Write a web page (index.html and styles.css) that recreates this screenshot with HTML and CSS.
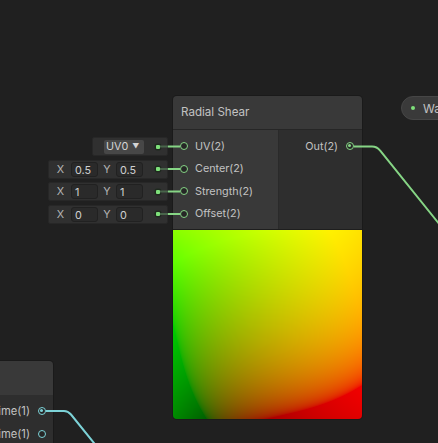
FILE: index.html
```html
<!DOCTYPE html>
<html lang="en">
<head>
    <meta charset="UTF-8">
    <meta name="viewport" content="width=device-width, initial-scale=1.0">
    <title>Radial Shear</title>
    <link rel="stylesheet" href="styles.css">
</head>
<body>
    <div class="graph">
        <!-- default values feeding the unconnected inputs -->
        <div class="inline-fields">
            <div class="field field-uv">
                <span class="dropdown">UV0 <span class="caret">&#9660;</span></span>
                <span class="field-dot"></span>
            </div>
            <div class="field">
                <span class="axis axis-x">X</span><span class="num">0.5</span>
                <span class="axis">Y</span><span class="num">0.5</span>
                <span class="field-dot"></span>
            </div>
            <div class="field">
                <span class="axis axis-x">X</span><span class="num">1</span>
                <span class="axis">Y</span><span class="num">1</span>
                <span class="field-dot"></span>
            </div>
            <div class="field">
                <span class="axis axis-x">X</span><span class="num">0</span>
                <span class="axis">Y</span><span class="num">0</span>
                <span class="field-dot"></span>
            </div>
        </div>

        <div class="node shear-node">
            <div class="node-title">Radial Shear</div>
            <div class="node-body">
                <div class="inputs">
                    <div class="port-row"><span class="port"></span>UV(2)</div>
                    <div class="port-row"><span class="port"></span>Center(2)</div>
                    <div class="port-row"><span class="port"></span>Strength(2)</div>
                    <div class="port-row"><span class="port"></span>Offset(2)</div>
                </div>
                <div class="outputs">
                    <div class="port-row out">Out(2)<span class="port connected"></span></div>
                </div>
            </div>
            <canvas class="preview" id="preview" width="189" height="189"></canvas>
        </div>

        <div class="node time-node">
            <div class="node-title">Time</div>
            <div class="time-body">
                <div class="port-row out">Time(1)<span class="port float connected"></span></div>
                <div class="port-row out">Sine Time(1)<span class="port float"></span></div>
            </div>
        </div>

        <div class="pill"><span class="pill-dot"></span>Water</div>

        <svg class="wires" width="438" height="443" viewBox="0 0 438 443">
            <g fill="none" stroke-width="2">
                <path class="wire-dim" d="M160 146.5H168M160 169H168M160 191.5H168M160 214H168"/>
                <path class="wire-green" d="M168 146.5H180M168 169H180M168 191.5H180M168 214H180"/>
                <path class="wire-green" d="M354 146.5H372Q377 146.5 380 150.5L440 225"/>
                <path class="wire-cyan" d="M46 411H64Q68 411 71 414.5L98 448"/>
            </g>
        </svg>
    </div>
    <script>
        // Preview: UV run through the radial shear, shown as R/G
        const cv = document.getElementById('preview');
        const ctx = cv.getContext('2d');
        const size = cv.width;
        const img = ctx.createImageData(size, size);
        const toSrgb = (c) => {
            c = Math.min(Math.max(c, 0), 1);
            return c <= 0.0031308 ? c * 12.92 : 1.055 * Math.pow(c, 1 / 2.4) - 0.055;
        };
        for (let py = 0; py < size; py++) {
            for (let px = 0; px < size; px++) {
                const u = (px + 0.5) / size;
                const v = 1 - (py + 0.5) / size;
                const dx = u - 0.5, dy = v - 0.5;
                const d2 = dx * dx + dy * dy;
                const i = (py * size + px) * 4;
                img.data[i] = Math.round(toSrgb(u + dy * d2) * 255);
                img.data[i + 1] = Math.round(toSrgb(v - dx * d2) * 255);
                img.data[i + 2] = 0;
                img.data[i + 3] = 255;
            }
        }
        ctx.putImageData(img, 0, 0);
    </script>
</body>
</html>
```

FILE: styles.css
```css
body {
    margin: 0;
    padding: 0;
    background-color: #202020;
    font-family: Inter, "Noto Sans", sans-serif;
    font-size: 10.8px;
    color: #c2c2c2;
    overflow: hidden;
}
.graph {
    position: relative;
    width: 438px;
    height: 443px;
    overflow: hidden;
}

/* nodes */
.node {
    position: absolute;
    border-radius: 4px;
    box-shadow: 0 0 0 1px #1a1a1a;
    overflow: hidden;
}
.node-title {
    height: 33px;
    line-height: 33px;
    padding-left: 8px;
    font-size: 11.6px;
    background-color: #393939;
    border-bottom: 1px solid #262626;
}
.shear-node {
    left: 173px;
    top: 96px;
    width: 189px;
}
.node-body {
    display: flex;
    height: 99px;
}
.inputs {
    width: 106px;
    padding-top: 5px;
    background-color: #393939;
    border-right: 1px solid #2a2a2a;
    box-sizing: border-box;
}
.outputs {
    flex: 1;
    padding-top: 5px;
    background-color: #2e2e2e;
}
.port-row {
    display: flex;
    align-items: center;
    height: 22.5px;
    padding-left: 7px;
    white-space: nowrap;
}
.port-row .port {
    margin-right: 7px;
}
.port-row.out {
    justify-content: flex-end;
    padding-left: 0;
    padding-right: 8px;
}
.port-row.out .port {
    margin-right: 0;
    margin-left: 8px;
}
.port {
    position: relative;
    width: 8px;
    height: 8px;
    box-sizing: border-box;
    border: 1.5px solid #86d585;
    border-radius: 50%;
    background-color: #262626;
    flex-shrink: 0;
}
.port.connected::after {
    content: "";
    position: absolute;
    left: 1px;
    top: 1px;
    width: 3px;
    height: 3px;
    border-radius: 50%;
    background-color: #86d585;
}
.port.float {
    border-color: #7dd3d8;
}
.port.float.connected::after {
    background-color: #7dd3d8;
}
.preview {
    display: block;
    width: 189px;
    height: 189px;
    border-top: 1px solid #1e1e1e;
}

.time-node {
    left: -60px;
    top: 361px;
    width: 113px;
}
.time-node .node-title {
    height: 34px;
    line-height: 34px;
    border-bottom: none;
}
.time-body {
    height: 60px;
    padding-top: 5px;
    background-color: #2e2e2e;
}
.time-body .port-row.out {
    font-size: 11.2px;
    padding-right: 7px;
}

/* inline default value fields */
.inline-fields {
    position: absolute;
    left: 48px;
    top: 137px;
    width: 120px;
    display: flex;
    flex-direction: column;
    align-items: flex-end;
    gap: 3.5px;
}
.field {
    display: flex;
    align-items: center;
    width: 120px;
    height: 19px;
    box-sizing: border-box;
    background-color: #303030;
    border: 1px solid #272727;
    border-radius: 2px;
    padding-left: 1px;
}
.field-uv {
    width: 76px;
    padding-left: 11px;
}
.axis {
    width: 18px;
    text-align: center;
    color: #b5b5b5;
}
.axis-x {
    width: 21px;
}
.num {
    width: 27px;
    height: 15px;
    line-height: 15px;
    box-sizing: border-box;
    padding-left: 3px;
    background-color: #2a2a2a;
    border: 1px solid #212121;
    border-radius: 3px;
    color: #d0d0d0;
}
.dropdown {
    width: 40px;
    height: 14px;
    line-height: 14px;
    box-sizing: border-box;
    padding-left: 2px;
    background-color: #474747;
    border-radius: 2px;
    color: #d4d4d4;
    white-space: nowrap;
}
.caret {
    font-size: 7px;
    margin-left: 1px;
    vertical-align: 1px;
}
.field-dot {
    width: 4px;
    height: 4px;
    margin-left: auto;
    margin-right: 7px;
    border-radius: 1px;
    background-color: #7ee07a;
    box-shadow: 0 0 0 1.5px #1f2a1f;
}

/* group pill at the top right */
.pill {
    position: absolute;
    left: 401px;
    top: 96px;
    height: 24px;
    width: 80px;
    box-sizing: border-box;
    display: flex;
    align-items: center;
    padding-left: 9px;
    background-color: #3a3a3a;
    border: 1px solid #464646;
    border-radius: 12px;
    font-size: 12px;
    white-space: nowrap;
}
.pill-dot {
    width: 4px;
    height: 4px;
    margin-right: 8px;
    border-radius: 50%;
    background-color: #7ee07a;
}

.wires {
    position: absolute;
    left: 0;
    top: 0;
    pointer-events: none;
}
.wire-green {
    stroke: #86d585;
}
.wire-dim {
    stroke: #48654a;
}
.wire-cyan {
    stroke: #7dd3d8;
}
```
